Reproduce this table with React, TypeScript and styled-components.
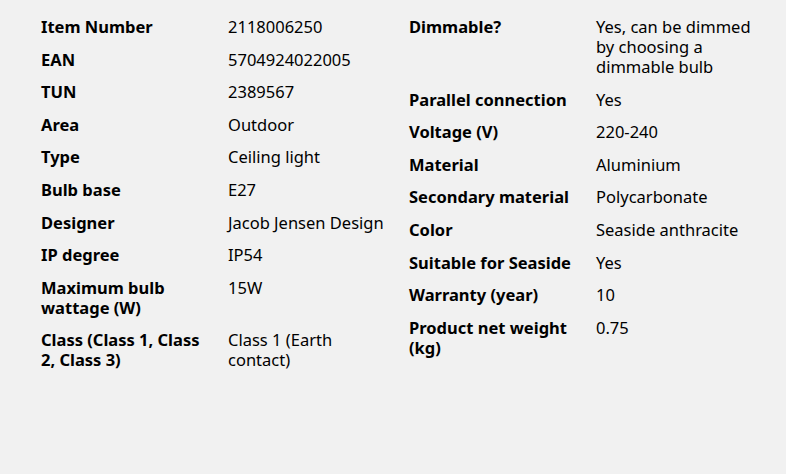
import React from "react";
import styled, { createGlobalStyle } from "styled-components";

const GlobalStyle = createGlobalStyle`
  html, body {
    margin: 0;
    background: #f1f1f1;
  }
  body {
    font-family: "Noto Sans", "Open Sans", sans-serif;
    color: #000;
  }
`;

const Page = styled.main`
  width: 786px;
  height: 474px;
  box-sizing: border-box;
  padding: 17px 0 0 41px;
  background: #f1f1f1;
`;

const Specs = styled.section`
  display: grid;
  grid-template-columns: 368px 368px;
  align-items: start;
`;

const SpecList = styled.dl`
  margin: 0;
  display: flex;
  flex-direction: column;
  gap: 12.6px;
`;

const SpecRow = styled.div`
  display: grid;
  grid-template-columns: 187px 181px;
  font-size: 16.5px;
  line-height: 20px;
`;

const Term = styled.dt`
  margin: 0;
  padding-right: 19px;
  font-weight: 700;
`;

const Desc = styled.dd`
  margin: 0;
  padding-right: 18px;
  font-weight: 400;
`;

type Spec = [string, string];

const left: Spec[] = [
  ["Item Number", "2118006250"],
  ["EAN", "5704924022005"],
  ["TUN", "2389567"],
  ["Area", "Outdoor"],
  ["Type", "Ceiling light"],
  ["Bulb base", "E27"],
  ["Designer", "Jacob Jensen Design"],
  ["IP degree", "IP54"],
  ["Maximum bulb wattage (W)", "15W"],
  ["Class (Class 1, Class 2, Class 3)", "Class 1 (Earth contact)"],
];

const right: Spec[] = [
  ["Dimmable?", "Yes, can be dimmed by choosing a dimmable bulb"],
  ["Parallel connection", "Yes"],
  ["Voltage (V)", "220-240"],
  ["Material", "Aluminium"],
  ["Secondary material", "Polycarbonate"],
  ["Color", "Seaside anthracite"],
  ["Suitable for Seaside", "Yes"],
  ["Warranty (year)", "10"],
  ["Product net weight (kg)", "0.75"],
];

function List({ items }: { items: Spec[] }) {
  return (
    <SpecList>
      {items.map(([k, v]) => (
        <SpecRow key={k}>
          <Term>{k}</Term>
          <Desc>{v}</Desc>
        </SpecRow>
      ))}
    </SpecList>
  );
}

export default function App() {
  return (
    <Page>
      <GlobalStyle />
      <Specs>
        <List items={left} />
        <List items={right} />
      </Specs>
    </Page>
  );
}
